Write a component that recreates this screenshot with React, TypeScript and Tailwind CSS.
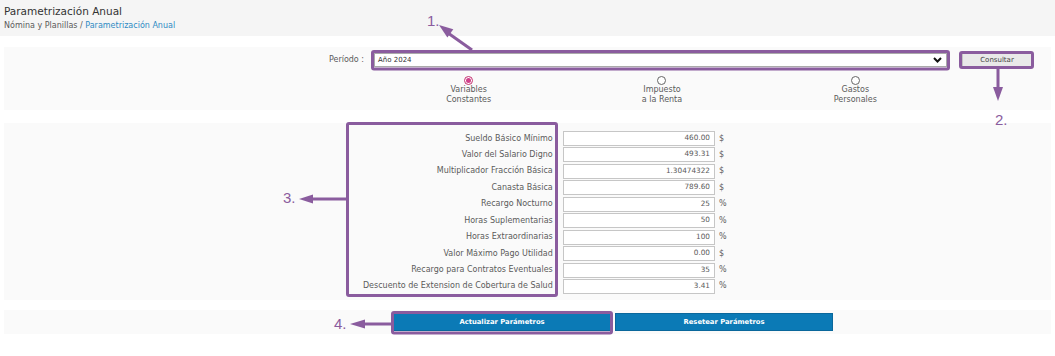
import React from 'react'

const font = "font-['DejaVu_Sans',sans-serif]"

const rows = [
  { label: 'Sueldo Básico Mínimo', value: '460.00', unit: '$' },
  { label: 'Valor del Salario Digno', value: '493.31', unit: '$' },
  { label: 'Multiplicador Fracción Básica', value: '1.30474322', unit: '$' },
  { label: 'Canasta Básica', value: '789.60', unit: '$' },
  { label: 'Recargo Nocturno', value: '25', unit: '%' },
  { label: 'Horas Suplementarias', value: '50', unit: '%' },
  { label: 'Horas Extraordinarias', value: '100', unit: '%' },
  { label: 'Valor Máximo Pago Utilidad', value: '0.00', unit: '$' },
  { label: 'Recargo para Contratos Eventuales', value: '35', unit: '%' },
  { label: 'Descuento de Extension de Cobertura de Salud', value: '3.41', unit: '%' },
]

const options = [
  { l1: 'Variables', l2: 'Constantes', on: true },
  { l1: 'Impuesto', l2: 'a la Renta', on: false },
  { l1: 'Gastos', l2: 'Personales', on: false },
]

function Radio({ on }: { on: boolean }) {
  return (
    <span className={`w-[9px] h-[9px] rounded-full border flex items-center justify-center bg-white ${on ? 'border-[#c2306f]' : 'border-[#666]'}`}>
      {on && <span className="w-[5px] h-[5px] rounded-full bg-[#d0408a]" />}
    </span>
  )
}

// purple callouts drawn over the page
function Callouts() {
  const c = '#8a5c9e'
  return (
    <svg className="absolute inset-0 pointer-events-none" width={1055} height={356}>
      <g fill="none" stroke={c} strokeWidth={3}>
        <rect x={372.5} y={51.5} width={576} height={17.5} rx={1.5} />
        <rect x={960.5} y={52.5} width={72} height={15} rx={1.5} />
        <rect x={347.5} y={123.5} width={209} height={172} rx={1.5} />
        <rect x={392.5} y={312.5} width={219} height={20.5} rx={1.5} />
        <line x1={472} y1={50} x2={448} y2={33} />
        <line x1={998} y1={69} x2={998} y2={90} />
        <line x1={346} y1={199} x2={310} y2={199} />
        <line x1={391} y1={324} x2={362} y2={324} />
      </g>
      <g fill={c}>
        <polygon points="439,25 447.4,37.4 453.3,29.3" />
        <polygon points="998,101 993,87 1003,87" />
        <polygon points="299,199 313,194.5 313,203.5" />
        <polygon points="350,324 365,319.5 365,328.5" />
      </g>
      <g fill={c} fontFamily="'Liberation Sans', sans-serif" fontSize={15}>
        <text x={427} y={26}>1.</text>
        <text x={995} y={125}>2.</text>
        <text x={283} y={203}>3.</text>
        <text x={334} y={329}>4.</text>
      </g>
    </svg>
  )
}

export default function App() {
  return (
    <div className={`relative w-[1055px] h-[356px] bg-white text-[#5a5a5a] ${font}`}>
      <div className="h-[36px] bg-[#f5f5f5] px-[4px] pt-[5px]">
        <div className="text-[10.5px] leading-[13px] text-[#333]">Parametrización Anual</div>
        <div className="text-[8px] leading-[10px] mt-[3px] text-[#5a5a5a]">
          Nómina y Planillas / <span className="text-[#2e8bc4]">Parametrización Anual</span>
        </div>
      </div>

      <div className="mx-[4px] mt-[11px] h-[63px] bg-[#fafafa] pt-[6px]">
        <div className="flex items-center h-[14px]">
          <div className="w-[360px] text-right text-[8px]">Período :</div>
          <div className="ml-[10px] w-[573px] h-[14px] bg-white border border-[#aaa] flex items-center justify-between pl-[3px] pr-[4px] text-[7px] text-[#333]">
            <span>Año 2024</span>
            <svg width="9" height="6" viewBox="0 0 9 6">
              <path d="M1 1 L4.5 4.5 L8 1" fill="none" stroke="#111" strokeWidth="2" />
            </svg>
          </div>
          <div className="ml-[15px] w-[70px] h-[14px] bg-[#e9e9e9] border border-[#c4c4c4] flex items-center justify-center text-[7px] text-[#444]">
            Consultar
          </div>
        </div>
        <div className="ml-[368px] w-[580px] grid grid-cols-3 mt-[9px]">
          {options.map(o => (
            <div key={o.l1} className="flex flex-col items-center text-[8px] leading-[10px]">
              <Radio on={o.on} />
              <span>{o.l1}</span>
              <span>{o.l2}</span>
            </div>
          ))}
        </div>
      </div>

      <div className="mx-[4px] mt-[13px] h-[177px] bg-[#fafafa] pt-[8px] flex flex-col gap-[1.44px]">
        {rows.map(r => (
          <div key={r.label} className="flex items-center h-[15px]">
            <div className="w-[554px] text-right text-[8px]">{r.label} :</div>
            <div className="ml-[5px] w-[152px] h-[15px] bg-white border border-[#c6c6c6] flex items-center justify-end pr-[4px] text-[7.3px]">
              {r.value}
            </div>
            <span className="ml-[4px] text-[8px]">{r.unit}</span>
          </div>
        ))}
      </div>

      <div className="mx-[4px] mt-[10px] h-[24px] bg-[#fafafa] pt-[3px] flex">
        <div className="ml-[389px] w-[218px] h-[18px] bg-[#0b7ab6] border border-[#0a679b] flex items-center justify-center text-[6.8px] font-bold text-white">
          Actualizar Parámetros
        </div>
        <div className="ml-[4px] w-[218px] h-[18px] bg-[#0b7ab6] border border-[#0a679b] flex items-center justify-center text-[6.8px] font-bold text-white">
          Resetear Parámetros
        </div>
      </div>

      <Callouts />
    </div>
  )
}
